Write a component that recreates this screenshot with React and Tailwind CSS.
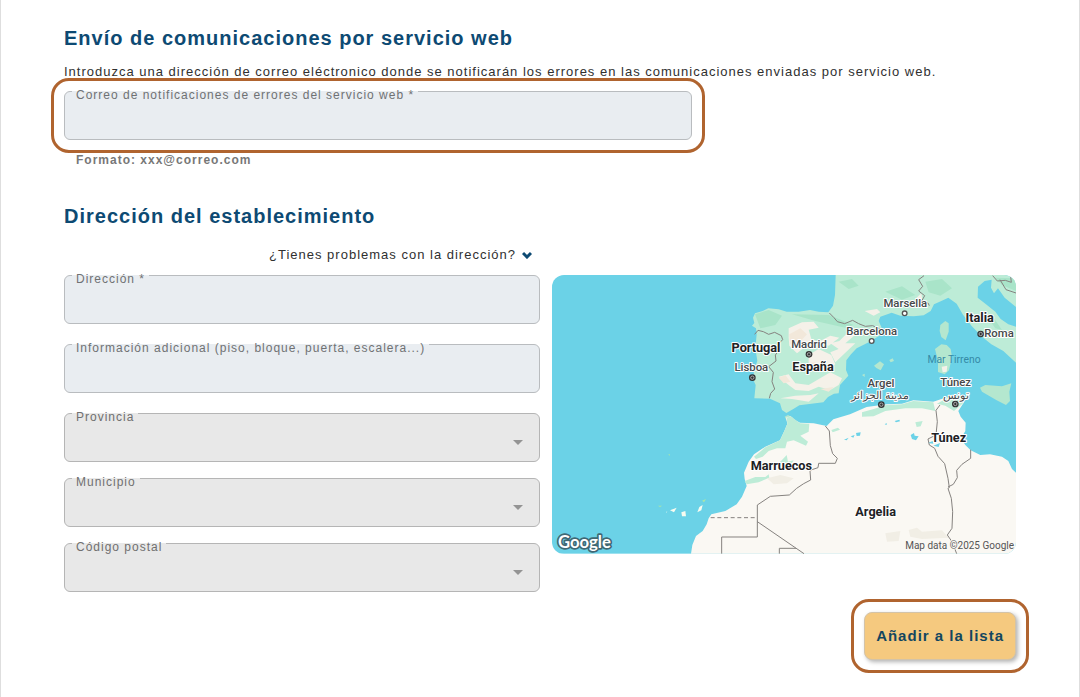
import { useState } from "react";

const TextField = ({ id, label, type = "text", value, onChange }) => {
  return (
    <div className="relative h-[49px] rounded-md border border-[#b9bcbf] bg-[#e9edf1]">
      <input
        id={id}
        type={type}
        value={value}
        onChange={onChange}
        className="h-full w-full rounded-md bg-transparent px-3 pt-3 text-sm text-gray-800 outline-none"
      />
      <label
        htmlFor={id}
        className="absolute -top-px left-[7px] bg-[#e9edf1] pl-1 pr-1 text-xs leading-2 text-[#707274]"
      >
        {label}
      </label>
    </div>
  );
};

const SelectField = ({ id, label }) => {
  return (
    <div className="relative h-[49px] rounded-md border border-[#b5b5b5] bg-[#e8e8e8]">
      <select
        id={id}
        disabled
        className="h-full w-full appearance-none rounded-md bg-transparent px-3 pt-3 text-sm outline-none"
      />
      <label
        htmlFor={id}
        className="absolute -top-px left-[7px] bg-[#e8e8e8] pl-1 pr-1 text-xs leading-2 text-[#707070]"
      >
        {label}
      </label>
      <svg
        viewBox="0 0 10 5"
        className="pointer-events-none absolute right-4 bottom-4 h-[5px] w-[10px] fill-[#949494]"
      >
        <path d="M0 0h10L5 5z" />
      </svg>
    </div>
  );
};

const Highlight = () => (
  <div className="pointer-events-none absolute -inset-[13px] rounded-[18px] border-3 border-[#b0642f]" />
);

const countries = [
  { name: "Portugal", x: 612, y: 234 },
  { name: "España", x: 783, y: 290 },
  { name: "Italia", x: 1283, y: 142 },
  { name: "Marruecos", x: 688, y: 588 },
  { name: "Túnez", x: 1190, y: 504 },
  { name: "Argelia", x: 971, y: 724 },
];

const cities = [
  { name: "Madrid", x: 771, y: 221 },
  { name: "Lisboa", x: 598, y: 291 },
  { name: "Barcelona", x: 959, y: 182 },
  { name: "Marsella", x: 1060, y: 99 },
  { name: "Roma", x: 1341, y: 188 },
  { name: "Argel", x: 987, y: 337 },
  { name: "مدينة الجزائر", x: 985, y: 373 },
  { name: "Túnez", x: 1211, y: 334 },
  { name: "تونس", x: 1211, y: 373 },
];

const capitals = [
  [771, 238],
  [601, 308],
  [1286, 177],
  [988, 389],
  [1210, 387],
];

const EstablishmentMap = () => {
  return (
    <svg
      viewBox="0 0 1392 836"
      role="img"
      aria-label="Mapa del establecimiento"
      className="block w-full rounded-xl tracking-normal"
      fontFamily="Roboto, 'Noto Sans', sans-serif"
    >
      <rect width="1392" height="836" fill="#6bd2e7" />

      {/* Europe */}
      <path
        fill="#bdecd7"
        d="M851 0L849 60L843 92L829 112L800 110L774 105L740 110L704 110L680 103L649 100L632 108L609 115L603 128L607 144L600 152L612 160L614 178L610 220L616 258L606 285L604 315L611 330L607 370L654 371L684 385L690 405L703 414L724 402L742 391L814 382L828 366L846 356L860 355L864 330L889 302L882 285L883 256L897 238L914 220L950 202L982 182L989 158L980 138L985 125L1019 113L1045 122L1085 124L1115 121L1136 108L1146 88L1168 78L1189 68L1214 86L1232 118L1259 153L1290 185L1318 208L1354 228L1392 263V155L1369 148L1346 132L1330 110L1302 88L1277 68L1278 35L1298 18L1319 14L1317 38L1326 55L1338 40L1358 68L1392 96V0Z"
      />
      <path
        fill="#a9e4c9"
        d="M609 118L650 105L690 122L670 150L625 160ZM720 118L830 120L905 150L880 158L790 138ZM860 20L900 12L920 32L890 42ZM1000 50L1050 34L1090 60L1050 74ZM1120 20L1170 12L1200 40L1165 62L1130 52ZM1300 118L1325 128L1350 165L1330 160ZM1330 8L1392 10V48L1350 30Z"
      />
      {/* Dry inland areas */}
      <path
        fill="#f5f1e9"
        d="M710 160L750 142L785 140L800 158L770 164L778 192L800 200L835 182L862 188L830 212L800 205L760 215L735 235L712 212L710 188ZM835 205L862 198L900 160L930 162L880 205L910 205L850 262L835 232L860 222ZM770 240L800 222L838 240L850 268L820 290L800 275L770 280ZM680 305L710 298L730 325L770 330L835 292L870 310L860 330L835 345L800 335L770 348L730 345L710 330ZM685 370L730 362L775 360L800 355L770 380L720 372ZM938 108L975 102L985 112L965 122ZM1092 70L1108 55L1112 80Z"
      />
      <path
        fill="#f2e8da"
        d="M712 178L745 160L765 178L740 205L714 208ZM750 268L790 262L795 290L760 285ZM680 308L700 300L715 320L695 325ZM805 342L845 336L830 350Z"
      />

      {/* Islands */}
      <g fill="#b4e7cf">
        <path d="M1165 150L1180 138L1190 145L1190 170L1181 196L1168 186L1163 168Z" />
        <path d="M1149 222L1168 208L1184 210L1196 222L1200 245L1191 286L1178 298L1158 291L1158 258Z" />
        <path d="M1284 338L1300 330L1350 334L1378 325L1372 350L1374 378L1362 390L1334 376L1290 350Z" />
        <path d="M966 272L984 259L996 268L986 286L973 279Z" />
        <path d="M1012 255L1022 250L1026 258L1016 262ZM930 300L938 296L938 306Z" />
        <path d="M698 425L708 420L722 428L718 440L705 438Z" />
      </g>
      <path fill="#f5f1e9" d="M1169 275L1186 272L1184 290L1172 292Z" />

      {/* North Africa */}
      <path
        fill="#faf8f3"
        d="M417 836L421 810L432 783L452 768L464 748L470 730L478 718L520 708L554 688L570 665L584 633L578 612L576 593L590 560L606 538L640 515L684 496L698 466L706 446L702 428L716 424L730 436L744 443L785 445L824 453L844 433L894 418L944 396L1004 388L1050 386L1084 376L1144 380L1184 367L1210 375L1224 366L1236 382L1219 408L1226 425L1241 443L1240 468L1227 490L1240 510L1256 526L1285 540L1314 538L1350 545L1369 558L1380 582L1392 593V836Z"
      />
      <path
        fill="#bdecd7"
        d="M684 496L698 466L706 446L704 428L716 424L735 438L744 445L772 446L770 470L745 482L768 500L762 512L725 496L705 500L700 520L675 520L650 528L632 545L612 552L606 545L640 517ZM578 618L610 606L640 606L650 598L652 608L620 622L584 628ZM930 412L965 402L1004 390L1050 388L1084 378L1144 382L1150 408L1110 400L1060 400L1000 408L965 424L930 425ZM1155 386L1184 370L1210 378L1224 370L1234 384L1206 408L1180 392ZM838 465L858 458L864 464L842 472ZM1090 442L1112 438L1106 454L1094 456ZM690 555L704 540L708 560L725 556L720 564L680 564Z"
      />
      <path
        fill="#f1eee5"
        d="M645 610L685 600L725 610L705 625L665 628ZM1000 775L1045 768L1040 798L1005 800ZM1070 765L1095 758L1110 770L1170 766L1190 788L1110 792L1075 785Z"
      />
      {/* Salt lakes and small rivers */}
      <path
        fill="#6bd2e7"
        d="M912 474L926 472L924 482L914 483ZM896 484L908 480L904 488ZM876 494L890 488L884 496ZM1028 438L1042 434L1044 439L1032 442ZM998 448L1004 444L1004 450ZM1076 480L1086 474L1088 482L1100 484L1092 496L1080 492ZM1128 504L1142 498L1144 506ZM1144 512L1164 504L1160 516Z"
      />
      {/* Canary Islands */}
      <path
        fill="#f7fbf0"
        d="M354 706L374 698L366 712ZM388 712L400 708L402 724L390 724ZM436 712L442 696L452 690L448 706ZM342 710L346 710L344 713Z"
      />
      <path fill="#a9e7a8" d="M450 677L462 672L456 682ZM318 692L330 692L324 696ZM349 538L354 538L352 543Z" />

      {/* Borders */}
      <g fill="none" stroke="#85827e" strokeWidth="3" strokeLinejoin="round">
        <path d="M608 178L618 166L634 170L650 178L668 172L688 182L692 194L680 206L682 225L670 240L672 258L650 275L664 292L660 320L668 342L656 355L652 370" />
        <path d="M832 114L846 128L856 140L878 146L902 136L920 146L940 154L962 152L985 162" />
        <path d="M1116 2L1100 14L1112 34L1100 48L1118 62L1108 80L1128 84L1132 92" />
        <path d="M1322 2L1336 18L1360 16L1378 22L1376 4M1344 14L1362 44L1392 54" />
        <path d="M820 453L832 468L835 512L842 536L856 550L850 565L800 565L798 578L774 586L776 615L755 626L734 640L712 660L655 664L616 690V786H509V836M616 740L756 836M682 836V820H732" />
        <path d="M476 728H614" strokeDasharray="12 8" />
        <path d="M1164 390L1152 406L1156 440L1152 480L1128 492L1132 510L1148 520L1158 544L1178 566L1188 610L1192 638L1188 640L1198 670L1202 710L1200 760L1186 780L1200 800L1214 836" />
        <path d="M1256 524L1256 550L1230 568L1214 586L1216 608L1204 628L1188 636" />
      </g>

      <text x="1206" y="264" textAnchor="middle" fontSize="31" fill="#358aa6">
        Mar Tirreno
      </text>

      {/* City markers */}
      {capitals.map(([x, y]) => (
        <g key={`${x}-${y}`}>
          <circle cx={x} cy={y} r="10" fill="#333" />
          <circle cx={x} cy={y} r="5" fill="none" stroke="#ddd" strokeWidth="2" />
        </g>
      ))}
      <circle cx="959" cy="198" r="7" fill="#fff" stroke="#555" strokeWidth="4" />
      <circle cx="1058" cy="115" r="7" fill="#fff" stroke="#555" strokeWidth="4" />

      <g
        textAnchor="middle"
        dominantBaseline="central"
        stroke="#fff"
        strokeWidth="6"
        strokeLinejoin="round"
        paintOrder="stroke"
      >
        {cities.map((city) => (
          <text key={city.name + city.y} x={city.x} y={city.y - 14} fontSize="34" fontWeight="500" fill="#45484a">
            {city.name}
          </text>
        ))}
        {countries.map((country) => (
          <text key={country.name} x={country.x} y={country.y - 15} fontSize="38" fontWeight="700" fill="#202124">
            {country.name}
          </text>
        ))}
      </g>

      <text
        x="18"
        y="818"
        fontFamily="Lato, sans-serif"
        fontSize="50"
        fontWeight="700"
        fill="#fff"
        stroke="#3f6874"
        strokeWidth="10"
        strokeLinejoin="round"
        paintOrder="stroke"
      >
        Google
      </text>
      <text
        x="1386"
        y="822"
        textAnchor="end"
        fontFamily="Roboto, sans-serif"
        fontSize="30"
        fill="#555"
        stroke="#faf8f3"
        strokeWidth="5"
        paintOrder="stroke"
      >
        Map data ©2025 Google
      </text>
    </svg>
  );
};

const App = () => {
  const [email, setEmail] = useState("");
  const [address, setAddress] = useState("");
  const [extraInfo, setExtraInfo] = useState("");

  return (
    <main className="min-h-screen border-x border-[#dedede] bg-white px-[63px] pt-6 pb-9 font-['Liberation_Sans',Arial,sans-serif] tracking-[1px] text-[#303030]">
      {/* Web service notifications */}
      <section>
        <h2 className="text-xl leading-7 font-bold text-[#0d4a73]">
          Envío de comunicaciones por servicio web
        </h2>
        <p className="mt-2.5 text-[13px] leading-5">
          Introduzca una dirección de correo eléctronico donde se notificarán los errores en las comunicaciones enviadas por servicio web.
        </p>
        <div className="relative mt-[9px] w-[66%]">
          <TextField
            id="email"
            type="email"
            label="Correo de notificaciones de errores del servicio web *"
            value={email}
            onChange={(e) => setEmail(e.target.value)}
          />
          <Highlight />
        </div>
        <p className="mt-3 pl-3 text-xs leading-4 font-bold text-[#777]">
          Formato: xxx@correo.com
        </p>
      </section>

      {/* Address */}
      <section className="mt-[34px]">
        <h2 className="text-xl leading-7 font-bold text-[#0d4a73]">
          Dirección del establecimiento
        </h2>
        <div className="mt-[15px] flex w-1/2 justify-end pr-2">
          <button type="button" className="flex items-center gap-1.5 text-[13px] leading-5">
            ¿Tienes problemas con la dirección?
            <svg viewBox="0 0 10 8" className="h-2 w-2.5">
              <path d="M1 2l4 4 4-4" fill="none" stroke="#0d4a73" strokeWidth="3" />
            </svg>
          </button>
        </div>
        <div className="mt-2.5 flex items-start">
          <div className="flex w-1/2 flex-col gap-4">
            <div className="flex flex-col gap-5">
              <TextField
                id="address"
                label="Dirección *"
                value={address}
                onChange={(e) => setAddress(e.target.value)}
              />
              <TextField
                id="extra-info"
                label="Información adicional (piso, bloque, puerta, escalera...)"
                value={extraInfo}
                onChange={(e) => setExtraInfo(e.target.value)}
              />
              <SelectField id="province" label="Provincia" />
            </div>
            <SelectField id="city" label="Municipio" />
            <SelectField id="postcode" label="Código postal" />
          </div>
          <div className="min-w-0 flex-1 pl-3">
            <EstablishmentMap />
          </div>
        </div>
      </section>

      <div className="mt-5 flex justify-end">
        <div className="relative">
          <button
            type="button"
            className="block h-12 rounded-lg border border-[#d3c3a8] bg-[#f5c97f] px-[11px] text-[15px] font-bold text-[#12465f] shadow-[2px_2px_4px_rgba(0,0,0,0.3)]"
          >
            Añadir a la lista
          </button>
          <Highlight />
        </div>
      </div>
    </main>
  );
};

export default App;
